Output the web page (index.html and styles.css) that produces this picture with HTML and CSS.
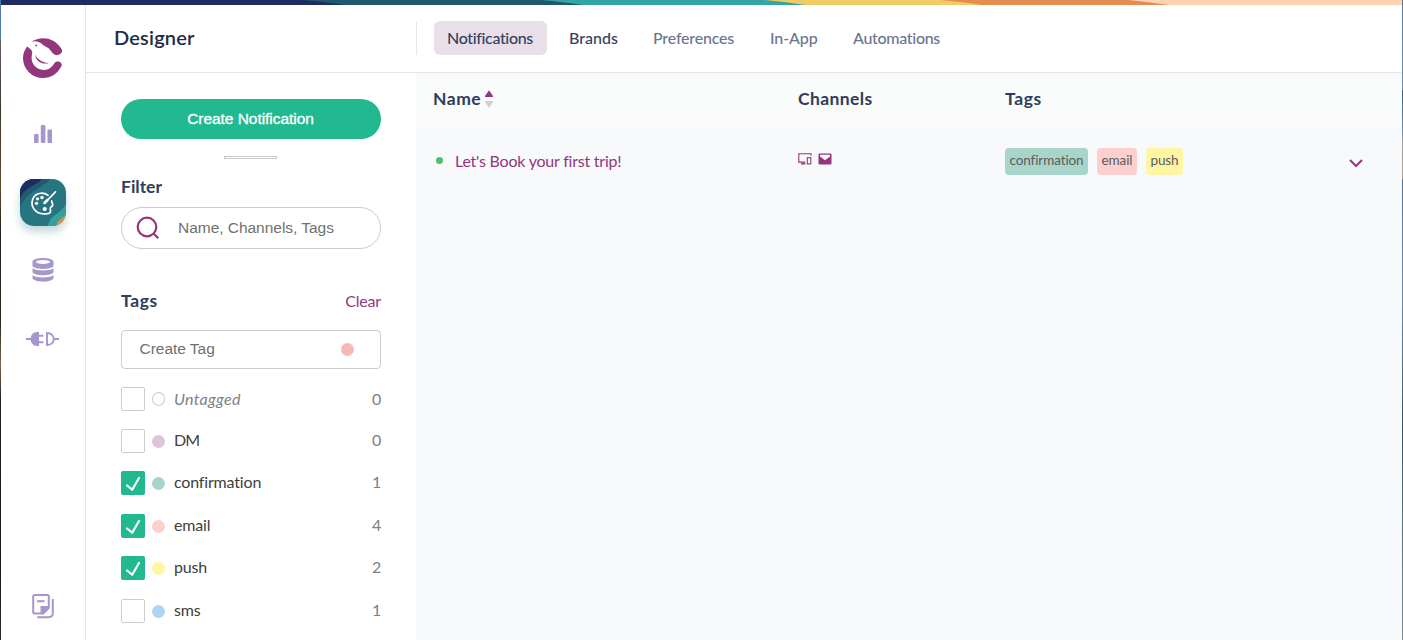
FILE: index.html
```html
<!DOCTYPE html>
<html lang="en">
<head>
<meta charset="utf-8">
<title>Designer</title>
<link rel="stylesheet" href="styles.css">
</head>
<body>
<div class="window">
  <svg class="ribbon" viewBox="0 0 1401 5" preserveAspectRatio="none" aria-hidden="true">
    <rect width="1401" height="5" fill="#1f2b61"/>
    <path d="M301 0Q325 2 343 5H1401V0Z" fill="#20586f"/>
    <path d="M540 0Q563 2 582 5H1401V0Z" fill="#34a5a5"/>
    <path d="M764 0Q786 2 805 5H1401V0Z" fill="#efcc65"/>
    <path d="M939 0Q962 2 981 5H1401V0Z" fill="#e78c50"/>
    <path d="M1127 0Q1149 2 1168 5H1401V0Z" fill="#ffd2b3"/>
  </svg>
  <div class="app">
    <nav class="rail">
      <svg class="logo" viewBox="0 0 40 40" aria-hidden="true">
        <path fill="#93367b" d="M4.2 8.4C1.700 11.500 0 15.500 0 20a20 20 0 0 0 20 20c8 0 14.500-4.100 18.500-12 1.800-4-4.600-6.200-6.800-3.200C29.200 29.500 25 32.200 20.500 32 13 31.500 8.500 25.800 8.600 19.800c0-2.800.900-4 .5-6.200C8.700 11.400 6.300 10 4.200 8.400Z"/>
        <path fill="#93367b" d="M8.500 3.800C17-2 31-1.500 38.700 11.200 40.500 15.500 35 18.500 31.500 16.500 28.500 15 27.300 10.500 23.500 9 20.300 8 18.500 4.400 13.800 3.500c-2-.4-3.800-.2-5.300.3Z"/>
        <path fill="#93367b" d="M12.200 16.700c2.600 4.900 6.500 7.600 13.800 8.300-6.600 2-13.200-1.600-13.800-8.300Z"/>
        <circle cx="13.300" cy="7.500" r=".9" fill="#93367b"/>
      </svg>
      <svg class="bars" viewBox="0 0 18 18" fill="#a596cc" aria-hidden="true">
        <rect y="9" width="4.600" height="9" rx="1"/><rect x="6.800" width="4.600" height="18" rx="1"/><rect x="13.500" y="4.500" width="4.600" height="13.500" rx="1"/>
      </svg>
      <div class="active">
        <svg viewBox="0 0 46 47" aria-hidden="true">
          <rect width="46" height="47" fill="#267580"/>
          <path d="M0 0H30C24 9 4 13 0 30Z" fill="#205b70"/>
          <path d="M0 0H22C18 6 5 7 0 20Z" fill="#1f2b61"/>
          <path d="M28 47C30 35 40 36 46 25V47Z" fill="#35a09a"/>
          <path d="M36 47C38 40 43 40 46 35V47Z" fill="#e78c50"/>
          <g fill="none" stroke="#fff" stroke-width="1.700" stroke-linecap="round" stroke-linejoin="round">
            <path d="M28 16.200C22.500 12.600 15.200 14 12.800 20 10 27.500 15.500 35 24 34.800c2.500 0 5 .4 6.200-1.300 1.100-1.600-.6-3.500.3-4.900.6-1 2.200-.9 2.200-2.600 0-1.700-1-2.300-1-4.200"/>
            <path d="M24.600 24 35.500 12.800"/><path stroke-width="2.500" d="m24.500 24 3-3"/>
          </g>
          <g fill="#fff"><circle cx="22" cy="18.500" r="1.700"/><circle cx="17.500" cy="19.800" r="1.600"/><circle cx="16.500" cy="24.300" r="1.600"/><circle cx="24.700" cy="30" r="2.100"/></g>
        </svg>
      </div>
      <svg class="database" viewBox="0 0 22 24" aria-hidden="true">
        <path fill="#a596cc" d="M.5 4C.5-1.200 21.500-1.200 21.500 4v3.500c0 4.500-21 4.500-21 0ZM.5 10.300c4 3 17 3 21 0v4c-2 4-19 4-21 0ZM.5 17.300c4 3 17 3 21 0v3c-2 4.500-19 4.500-21 0Z"/>
        <ellipse cx="11" cy="3.900" rx="7" ry="2" fill="#fff"/>
      </svg>
      <svg class="plug" viewBox="0 0 33 14" fill="none" stroke="#a596cc" stroke-width="1.900" aria-hidden="true">
        <path d="M0 7h6M12.500 3.700h4.800M12.500 10.300h4.800M28 7h5M21 1v12c9 0 9-12 0-12Z"/>
        <path fill="#a596cc" stroke="none" d="M13 0v14h-2C2.500 14 2.500 0 11 0Z"/>
      </svg>
      <svg class="docs" viewBox="0 0 22 25" fill="none" stroke="#a596cc" stroke-width="2" stroke-linejoin="round" aria-hidden="true">
        <path d="M1.200 2.500Q1.200 1 2.700 1h12.600q1.500 0 1.500 1.500v11.300l-5.500 5.700H2.700q-1.500 0-1.500-1.500Z"/>
        <path d="M5 7.200h7.500"/><path fill="#a596cc" stroke="none" d="M8.500 12h8.300v2.500L11 20H8.500Z"/>
        <path d="M20.800 5v14q0 4.200-4.200 4.200H5.200"/>
      </svg>
    </nav>
    <div class="workspace">
      <header class="topbar">
        <h1 class="title">Designer</h1>
        <div class="tabs">
          <a class="tab selected">Notifications</a>
          <a class="tab dark brands">Brands</a>
          <a class="tab prefs">Preferences</a>
          <a class="tab inapp">In-App</a>
          <a class="tab autos">Automations</a>
        </div>
      </header>
      <div class="content">
        <aside class="filters">
          <button class="create">Create Notification</button>
          <div class="grip"></div>
          <h2 class="heading filter-title">Filter</h2>
          <div class="search">
            <svg viewBox="0 0 24 24" fill="none" stroke="#93367b" stroke-width="2.200" aria-hidden="true"><circle cx="11" cy="11" r="9.300"/><path d="m17.800 17.800 4.500 4.500"/></svg>
            <span>Name, Channels, Tags</span>
          </div>
          <div class="tags-head"><h2 class="heading tags-title">Tags</h2><a class="clear">Clear</a></div>
          <div class="new-tag"><span>Create Tag</span><i class="dot coral"></i></div>
          <ul class="tag-list">
            <li class="row untagged"><i class="box"></i><i class="dot hollow"></i><span class="label">Untagged</span><span class="count">0</span></li>
            <li class="row r2"><i class="box"></i><i class="dot mauve"></i><span class="label dm">DM</span><span class="count">0</span></li>
            <li class="row r3"><i class="box on"><svg viewBox="0 0 24 24"><path d="m6 14.500 5.200 4.200L18 7"/></svg></i><i class="dot teal"></i><span class="label">confirmation</span><span class="count">1</span></li>
            <li class="row r4"><i class="box on"><svg viewBox="0 0 24 24"><path d="m6 14.500 5.200 4.200L18 7"/></svg></i><i class="dot pink"></i><span class="label">email</span><span class="count">4</span></li>
            <li class="row r5"><i class="box on"><svg viewBox="0 0 24 24"><path d="m6 14.500 5.200 4.200L18 7"/></svg></i><i class="dot yellow"></i><span class="label">push</span><span class="count">2</span></li>
            <li class="row r6"><i class="box"></i><i class="dot blue"></i><span class="label">sms</span><span class="count">1</span></li>
          </ul>
        </aside>
        <main class="table">
          <div class="thead">
            <div class="heading name-head">Name<svg class="sort" viewBox="0 0 8 18" aria-hidden="true"><path d="M4 .2 8 6v1H0V6Z" fill="#93367b"/><path d="M0 11h8v1l-4 6-4-6Z" fill="#d0d0d0"/></svg></div>
            <div class="heading chan-head">Channels</div>
            <div class="heading tags-title">Tags</div>
          </div>
          <div class="record">
            <div class="name"><i class="status"></i><a class="link">Let's Book your first trip!</a></div>
            <div class="channels">
              <svg viewBox="0 0 14 12" fill="none" stroke="#93367b" stroke-width="1.100" aria-hidden="true"><path d="M13 2.800V.8H.8v8.300h6.500M3 10.900h4.500M5.300 9v2"/><rect x="9.300" y="4.700" width="3.500" height="6.200"/></svg>
              <svg viewBox="0 0 14 12" aria-hidden="true"><rect x=".5" y=".5" width="13" height="11" rx="1.200" fill="#93367b"/><path d="M2 1.800h10v1.700L7 7.200 2 3.500Z" fill="#f8f9fb"/></svg>
            </div>
            <div class="chips"><span class="chip teal c1">confirmation</span><span class="chip pink c2">email</span><span class="chip yellow c3">push</span></div>
            <svg class="chevron" viewBox="0 0 14 9" fill="none" stroke="#93367b" stroke-width="2" aria-hidden="true"><path d="m1 1 6 6 6-6"/></svg>
          </div>
        </main>
      </div>
    </div>
  </div>
</div>
</body>
</html>
```
FILE: styles.css
```css
* { box-sizing: border-box; }
body {
  margin: 0; height: 640px; overflow: hidden; padding: 0 1px;
  font: 16px/20px Lato, "Open Sans", sans-serif; color: #404040;
  letter-spacing: -.17px; font-variant-ligatures: none;
  background: linear-gradient(#4e78aa 0, #557fac 38px, #6b5a58 42px, #3c362c 110px, #66482b 185px, #20241a 230px, #25291b 320px, #7a6353 365px, #24201f 400px, #15191b 560px, #302921 640px) left / 1px 100% no-repeat,
    linear-gradient(#537895 0, #718fa5 90px, #345d7b 91px, #7492ab 135px, #a1a1a0 140px, #aaa5a1 178px, #54728e 180px, #6e8ba6 290px, #345a68 425px, #778b99 640px) right / 1px 100% no-repeat;
}
.window { height: 640px; display: flex; flex-direction: column; background: #fff; }
.ribbon { width: 100%; height: 5px; flex: none; display: block; }
.app { display: flex; flex: 1; min-height: 0; }
.rail { width: 85px; border-right: 1px solid #e4e6e9; display: flex; flex-direction: column; align-items: center; flex: none; padding: 33px 1px 21px 0; }
.rail svg { display: block; flex: none; }
.logo { width: 40px; height: 40px; }
.bars { width: 18px; height: 18px; margin-top: 47px; }
.active { width: 46px; height: 47px; flex: none; margin: 36px 0 0 1px; border-radius: 14px; box-shadow: 0 6px 9px rgba(38,117,128,.28); }
.active svg { width: 46px; height: 47px; border-radius: 14px; }
.database { width: 22px; height: 24px; margin-top: 32px; }
.plug { width: 33px; height: 14px; margin-top: 50px; }
.docs { width: 22px; height: 25px; margin: auto 0 0 1px; }
.workspace { flex: 1; display: flex; flex-direction: column; min-width: 0; }
.topbar { height: 68px; flex: none; border-bottom: 1px solid #e4e6e9; display: flex; align-items: center; }
.title { width: 331px; height: 33px; border-right: 1px solid #e4e6e9; margin: 0; padding-left: 28px; font-size: 20px; line-height: 31px; font-weight: 600; letter-spacing: .2px; color: #1f2b47; }
.tabs { display: flex; align-items: center; padding: 0 0 2px 17px; color: #6a7590; }
.tab { height: 34px; line-height: 34px; font-weight: 500; }
.selected { width: 113px; padding-left: 13px; background: #e9dfe9; border-radius: 6px; color: #344160; margin-right: 22px; letter-spacing: -.35px; }
.dark { color: #344160; }
.brands { width: 84px; letter-spacing: 0; }
.prefs { width: 117px; letter-spacing: -.2px; }
.inapp { width: 83px; letter-spacing: -.1px; }
.autos { letter-spacing: -.3px; }
.content { flex: 1; display: flex; min-height: 0; }
.filters { width: 330px; padding: 26px 35px 0; flex: none; }
.create { display: block; width: 260px; height: 40px; border: 0; border-radius: 20px; background: #23b990; color: #fff; font: 15.500px "Liberation Sans", Arial, sans-serif; padding: 0 1px 0 0; -webkit-text-stroke: .3px #fff; letter-spacing: -.05px; }
.grip { width: 53px; height: 3px; border: 1px solid #c9c9c9; margin: 17px 0 0 103px; }
.heading { margin: 0; font-size: 17.500px; line-height: 22px; font-weight: 700; letter-spacing: .2px; color: #2f3d5b; }
.filter-title { margin-top: 17px; letter-spacing: 0; }
.tags-title { letter-spacing: .6px; }
.chan-head { letter-spacing: .4px; padding-left: 1px; }
.search { height: 42px; margin-top: 9px; border: 1px solid #ccc; border-radius: 21px; display: flex; align-items: center; padding-left: 14px; font: 15.500px "Liberation Sans", Arial, sans-serif; letter-spacing: -.03px; color: #707070; }
.search svg { width: 24px; height: 24px; margin: 0 18px 1px 0; }
.tags-head { display: flex; justify-content: space-between; align-items: center; margin-top: 41px; }
.clear { color: #93367b; padding-bottom: 1px; }
.new-tag { height: 39px; margin-top: 18px; border: 1px solid #ccc; border-radius: 4px; display: flex; align-items: center; justify-content: space-between; padding: 0 26px 2px 17.500px; font: 15.500px "Liberation Sans", Arial, sans-serif; letter-spacing: -.03px; color: #707070; }
.new-tag .dot { margin: 2px 0 0; }
.dot { width: 13px; height: 13px; border-radius: 50%; flex: none; margin: 1px 9px 0 7px; }
.hollow { border: 1px solid #ccc; height: 14px; }
.coral { background: #f8b8b8; }
.mauve { background: #dcc5dc; }
.teal { background: #a8d5ca; }
.pink { background: #fdcfcf; }
.yellow { background: #fff6a4; }
.blue { background: #aed3f3; }
.tag-list { list-style: none; margin: 18px 0 0; padding: 0; }
.row { display: flex; align-items: center; height: 24px; margin-bottom: 18px; }
.r3, .r5 { margin-bottom: 19px; }
.box { width: 24px; height: 24px; border: 1px solid #ccc; border-radius: 2px; flex: none; }
.on { border: 0; background: #23b990; }
.on svg { display: block; width: 24px; height: 24px; fill: none; stroke: #fff; stroke-width: 2.200; stroke-linecap: round; stroke-linejoin: round; }
.label, .count { padding-bottom: 2px; }
.dm { letter-spacing: -.9px; }
.untagged .label { font-style: italic; color: #808080; letter-spacing: .3px; padding-bottom: 0; }
.untagged .count { padding-bottom: 0; }
.untagged .dot { margin-top: 0; }
.count { margin-left: auto; color: #808080; }
.table { flex: 1; background: #f8f9fb; min-width: 0; }
.thead, .record { display: grid; grid-template-columns: 364px 208px 343px auto; align-items: center; padding-left: 17px; }
.thead { height: 54px; padding-bottom: 2px; background: linear-gradient(#f7f9fa 0, #fafbfb 14px, #fbfbfb); }
.name-head { display: flex; align-items: center; letter-spacing: .5px; }
.sort { width: 8px; height: 18px; margin: 0 0 1px 4px; }
.record { height: 70px; padding-bottom: 2px; }
.name { display: flex; align-items: center; color: #93367b; }
.link { letter-spacing: -.22px; }
.status { width: 7px; height: 7px; border-radius: 50%; background: #50be70; margin: 0 12px 1px 3px; }
.channels { display: flex; gap: 6px; padding: 0 0 4px 1px; }
.channels svg { width: 14px; height: 12px; }
.chips { display: flex; gap: 9px; }
.chip { height: 27px; line-height: 25px; border-radius: 4px; font-size: 13.500px; letter-spacing: -.1px; color: #5b5b5b; text-align: center; }
.c1 { width: 83px; }
.c2 { width: 40px; }
.c3 { width: 37px; }
.chevron { width: 14px; height: 9px; margin: 4px 0 0 1px; }
```
